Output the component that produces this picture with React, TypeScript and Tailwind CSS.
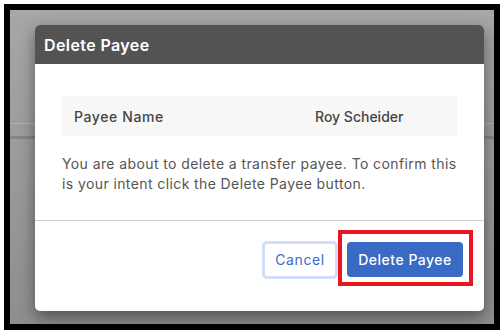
export default function App() {
  return (
    <div className="w-[502px] h-[332px] bg-white pl-1 pt-1 font-['Inter',sans-serif]">
      <div className="w-[496px] h-[326px] border-[6px] border-black">
        <div className="relative w-full h-full overflow-hidden bg-gradient-to-b from-[#a7a7a7] to-[#8e8e8e] pl-[25px] pr-[10px] pt-[15px]">
          {/* page behind the overlay */}
          <div className="absolute left-0 right-0 top-[113px] h-px bg-[#b2b2b2]" />
          <div className="absolute left-0 right-0 top-[126px] h-[3px] bg-[#868686]" />

          <div className="relative w-[449px] h-[286px] rounded-[5px] bg-white shadow-[0_6px_16px_rgba(0,0,0,0.45)] flex flex-col">
            <div className="h-[39px] rounded-t-[5px] bg-[#535353] flex items-center px-[9px]">
              <h2 className="text-white text-[16px] font-semibold tracking-[0.4px]">Delete Payee</h2>
            </div>

            <div className="px-[27px] pt-[32px] pb-[26px] border-b border-[#cfcfcf]">
              <div className="h-[40px] bg-[#f7f7f7] flex items-center pl-[12px] text-[14px] font-medium text-[#454545]">
                <span className="w-[241px] tracking-[0.6px]">Payee Name</span>
                <span>Roy Scheider</span>
              </div>
              <p className="mt-[18px] text-[14px] leading-[20px] tracking-[0.4px] text-[#555555]">
                You are about to delete a transfer payee. To confirm this is your intent click the Delete Payee button.
              </p>
            </div>

            <div className="flex-1 flex items-center justify-end gap-[9px] pr-[21px] pb-[13px]">
              <button className="h-[38px] w-[76px] rounded-[5px] border-[3px] border-[#d2ddf7] bg-white text-[14px] tracking-[0.6px] text-[#3b6bc6]">
                Cancel
              </button>
              <div className="relative">
                <button className="h-[35px] w-[116px] rounded-[4px] bg-[#396ac4] text-[14px] font-medium tracking-[0.5px] text-white">
                  Delete Payee
                </button>
                <div className="absolute -left-[9px] -right-[10px] -top-[12px] -bottom-[9px] border-4 border-[#e8161f]" />
              </div>
            </div>
          </div>
        </div>
      </div>
    </div>
  );
}
